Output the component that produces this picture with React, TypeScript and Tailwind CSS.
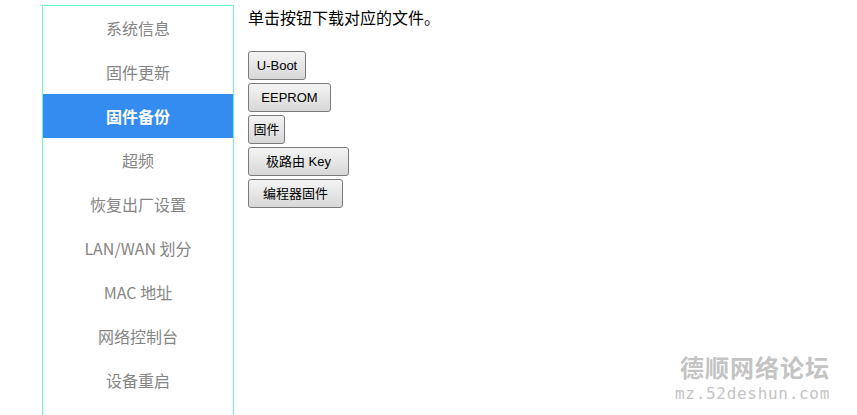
import React from 'react';

const menu = ['系统信息', '固件更新', '固件备份', '超频', '恢复出厂设置', 'LAN/WAN 划分', 'MAC 地址', '网络控制台', '设备重启'];

const buttons: { label: string; w: string }[] = [
  { label: 'U-Boot', w: 'w-[58px]' },
  { label: 'EEPROM', w: 'w-[83px]' },
  { label: '固件', w: 'w-[37px]' },
  { label: '极路由 Key', w: 'w-[101px]' },
  { label: '编程器固件', w: 'w-[95px]' },
];

export default function App() {
  const active = 2;
  return (
    <div className="relative w-[857px] h-[415px] overflow-hidden bg-white font-['Noto_Sans_CJK_SC',sans-serif]">
      <div className="flex h-full pl-[42px] pt-[5px]">
        <aside className="w-[192px] h-[420px] border-x border-t border-[#6cf5d0] shrink-0">
          {menu.map((m, i) => (
            <div
              key={m}
              className={`h-[44px] flex items-center justify-center text-[16px] ${
                i === active ? 'bg-[#348cf1] text-white font-bold' : 'text-[#858585]'
              }`}
            >
              {m}
            </div>
          ))}
        </aside>

        <main className="pl-[14px] pt-[3px]">
          <p className="text-[16px] text-black leading-[22px] font-['Liberation_Sans','Noto_Sans_CJK_SC',sans-serif]">单击按钮下载对应的文件。</p>
          <div className="mt-[21px] flex flex-col items-start gap-[3px]">
            {buttons.map((b) => (
              <button
                key={b.label}
                className={`${b.w} h-[29px] border border-[#7a7a7a] rounded-[3px] bg-gradient-to-b from-[#f4f4f4] to-[#d8d8d8] text-[13px] text-black font-['Liberation_Sans','Noto_Sans_CJK_SC',sans-serif] whitespace-pre`}
              >
                {b.label}
              </button>
            ))}
          </div>
        </main>
      </div>

      <div className="absolute right-[27px] top-[350px] flex flex-col items-end text-[#c4c4c4]">
        <span className="text-[24px] leading-[34px] font-bold tracking-[1px] font-['Noto_Sans_CJK_SC',sans-serif]">德顺网络论坛</span>
        <span className="mt-[2px] text-[16px] leading-[16px] tracking-[0.7px] font-['DejaVu_Sans_Mono',monospace]">mz.52deshun.com</span>
      </div>
    </div>
  );
}
